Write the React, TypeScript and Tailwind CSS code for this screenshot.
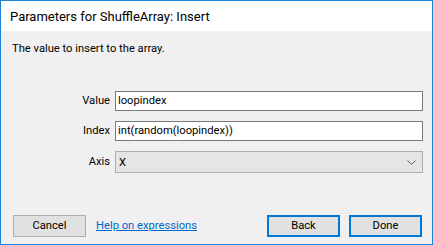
import React from 'react';

const font = { fontFamily: 'Roboto, "Noto Sans", sans-serif' };

const Row: React.FC<{ label: string; children: React.ReactNode }> = ({ label, children }) => (
  <div className="flex items-center">
    <div className="w-[114px] pr-[5px] text-right text-[11.2px] text-[#000]">{label}</div>
    <div className="flex-1">{children}</div>
  </div>
);

export default function App() {
  return (
    <div className="w-[433px] h-[245px] border border-[#1883d7] flex flex-col bg-[#f0f0f0] text-black" style={font}>
      {/* title bar */}
      <div className="h-[30px] bg-white flex items-center pl-[9px] text-[13px] leading-none text-[#000]">
        Parameters for ShuffleArray: Insert
      </div>

      <div className="flex-1 flex flex-col pr-[9px]">
        <p className="mt-[10px] pl-[11px] text-[11.2px] leading-[16px]">The value to insert to the array.</p>

        <div className="mt-[34px] flex flex-col gap-[10px]">
          <Row label="Value">
            <div className="h-[20px] border border-[#7a7a7a] bg-white flex items-center px-[2px] text-[11.2px]">loopindex</div>
          </Row>
          <Row label="Index">
            <div className="h-[20px] border border-[#7a7a7a] bg-white flex items-center px-[2px] text-[11.2px]">int(random(loopindex))</div>
          </Row>
          <Row label="Axis">
            <div className="h-[22px] border border-[#adadad] bg-[#e5e5e5] flex items-center justify-between pl-[3px] pr-[6px] text-[11.2px]">
              <span className="mt-[3px]">X</span>
              <svg width="9" height="5" viewBox="0 0 9 5" fill="none">
                <path d="M0.5 0.5 L4.5 4.5 L8.5 0.5" stroke="#606060" strokeWidth="1" />
              </svg>
            </div>
          </Row>
        </div>

        <div className="mt-auto mb-[7px] flex items-center pl-[12px]">
          <button className="w-[73px] h-[22px] border border-[#adadad] bg-[#e1e1e1] text-[11.2px] leading-none">Cancel</button>
          <a className="ml-[10px] text-[11.2px] text-[#0066cc] underline">Help on expressions</a>
          <div className="ml-auto flex gap-[9px] pr-[1px]">
            <button className="w-[73px] h-[22px] border-2 border-[#0078d7] bg-[#e1e1e1] text-[11.2px] leading-none">Back</button>
            <button className="w-[73px] h-[22px] border-2 border-[#0078d7] bg-[#e1e1e1] text-[11.2px] leading-none">Done</button>
          </div>
        </div>
      </div>
    </div>
  );
}
